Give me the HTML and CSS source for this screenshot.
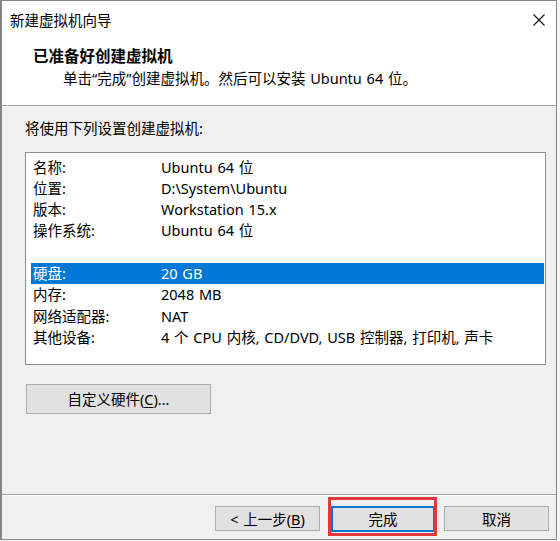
FILE: index.html
```html
<!DOCTYPE html>
<html lang="zh-CN">
<head>
<meta charset="utf-8">
<title>新建虚拟机向导</title>
<link rel="stylesheet" href="styles.css">
</head>
<body>
<div class="window">
  <div class="titlebar">
    <span class="title">新建虚拟机向导</span>
    <svg class="close" width="12" height="12" viewBox="0 0 12 12"><path d="M0.5 0.5 L11.5 11.5 M11.5 0.5 L0.5 11.5" stroke="#111" stroke-width="1.1" fill="none"/></svg>
  </div>
  <div class="header">
    <div class="h-title">已准备好创建虚拟机</div>
    <div class="h-sub">单击“完成”创建虚拟机。然后可以安装 Ubuntu 64 位。</div>
  </div>
  <div class="content">
    <div class="intro">将使用下列设置创建虚拟机:</div>
    <div class="listbox">
      <div class="row"><span class="k">名称:</span><span class="v">Ubuntu 64 位</span></div>
      <div class="row"><span class="k">位置:</span><span class="v">D:\System\Ubuntu</span></div>
      <div class="row"><span class="k">版本:</span><span class="v">Workstation 15.x</span></div>
      <div class="row"><span class="k">操作系统:</span><span class="v">Ubuntu 64 位</span></div>
      <div class="row"><span class="k"></span><span class="v"></span></div>
      <div class="row sel"><span class="k">硬盘:</span><span class="v">20 GB</span></div>
      <div class="row"><span class="k">内存:</span><span class="v">2048 MB</span></div>
      <div class="row"><span class="k">网络适配器:</span><span class="v">NAT</span></div>
      <div class="row"><span class="k">其他设备:</span><span class="v">4 个 CPU 内核, CD/DVD, USB 控制器, 打印机, 声卡</span></div>
    </div>
    <button class="btn custom">自定义硬件(<u>C</u>)...</button>
  </div>
  <div class="footer">
    <button class="btn fbtn back">&lt; 上一步(<u>B</u>)</button>
    <div class="finish-wrap">
      <button class="btn fbtn finish">完成</button>
      <span class="mark"></span>
    </div>
    <button class="btn fbtn cancel">取消</button>
  </div>
</div>
</body>
</html>
```

FILE: styles.css
```css
html, body {
  margin: 0;
  padding: 0;
}
body {
  width: 560px;
  height: 541px;
  background: #f7f7f7;
  font-family: "Noto Sans", "Noto Sans CJK SC", sans-serif;
  font-size: 14.5px;
  word-spacing: 1px;
  color: #000;
  overflow: hidden;
}
.window {
  box-sizing: border-box;
  width: 557px;
  height: 540px;
  border: 1px solid #858585;
  border-left-width: 2px;
  background: #f0f0f0;
  display: flex;
  flex-direction: column;
}
.titlebar {
  height: 37px;
  background: #fff;
  display: flex;
  align-items: center;
  justify-content: space-between;
  padding: 0 11px 0 8px;
}
.title {
  line-height: 20px;
}
.close {
  display: block;
  margin-top: 1px;
}
.header {
  background: #fff;
  height: 68px;
  box-sizing: border-box;
  padding: 8px 0 0 31px;
  border-bottom: 1px solid #a0a0a0;
  box-shadow: 0 1px 0 #fff;
}
.h-title {
  font-weight: bold;
  font-size: 15.5px;
  line-height: 20px;
}
.h-sub {
  line-height: 20px;
  margin-top: 2px;
  padding-left: 30px;
}
.content {
  flex: 1;
  padding: 12px 0 0 23px;
}
.intro {
  line-height: 20px;
}
.listbox {
  box-sizing: border-box;
  width: 521px;
  height: 213px;
  margin-top: 14px;
  background: #fff;
  border: 1px solid #8f8f8f;
  padding: 3.5px 1px 0 5px;
}
.row {
  display: flex;
  height: 21.3px;
  line-height: 21.3px;
  padding-left: 2px;
  white-space: nowrap;
}
.row .k {
  width: 128px;
}
.row.sel {
  background: #0078d7;
  color: #fff;
}
.btn {
  font-family: inherit;
  font-size: 14.5px;
  word-spacing: 1px;
  color: #000;
  background: #e1e1e1;
  border: 1px solid #adadad;
  padding: 0;
  margin: 0;
  line-height: 20px;
  box-sizing: border-box;
}
.btn u {
  text-decoration-thickness: 1px;
  text-underline-offset: 2px;
}
.custom {
  display: block;
  width: 185px;
  height: 30px;
  margin: 19px 0 0 1px;
}
.footer {
  height: 45px;
  box-sizing: border-box;
  border-top: 1px solid #a0a0a0;
  box-shadow: inset 0 1px 0 #fff;
  display: flex;
  align-items: flex-start;
  padding: 11px 7px 0 0;
  justify-content: flex-end;
}
.fbtn {
  width: 105px;
  height: 25px;
}
.finish-wrap {
  position: relative;
  margin: 0 9px 0 11px;
}
.finish {
  display: block;
  width: 104px;
  height: 26px;
  border: 2px solid #0078d7;
}
.mark {
  position: absolute;
  left: -3px;
  top: -9px;
  width: 109px;
  height: 39px;
  box-sizing: border-box;
  border: 3px solid #e0383d;
}
```
